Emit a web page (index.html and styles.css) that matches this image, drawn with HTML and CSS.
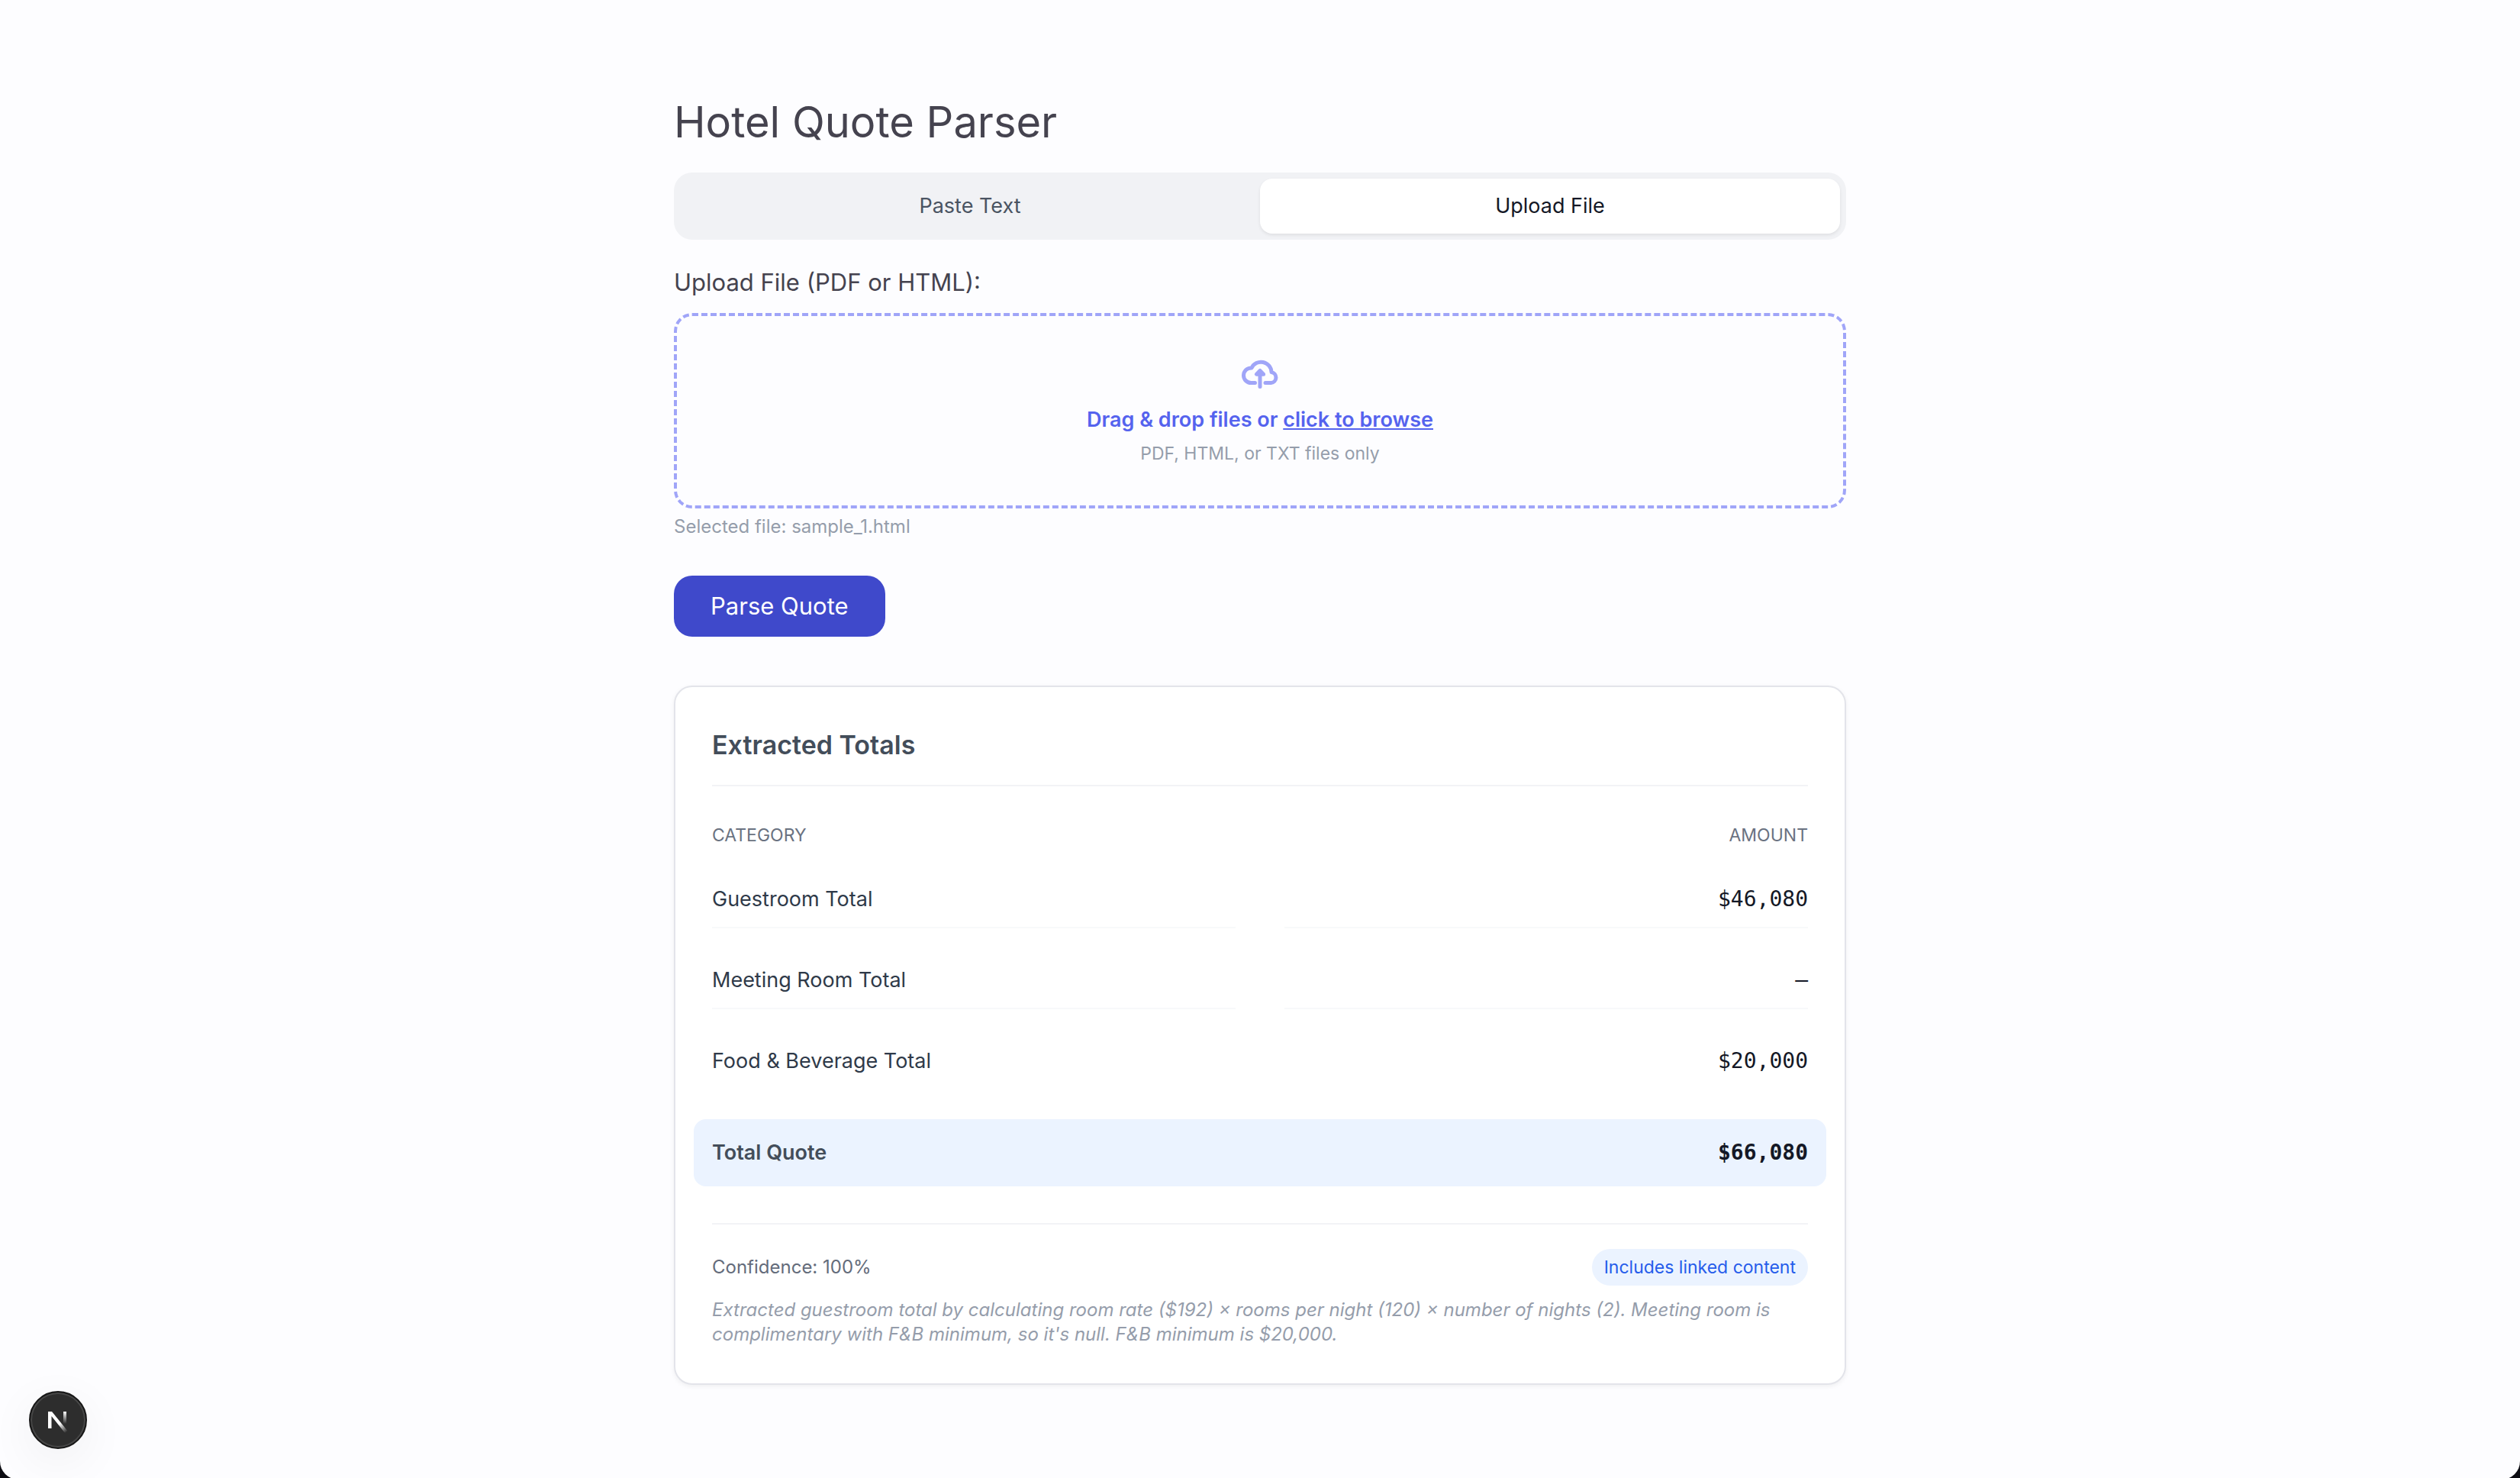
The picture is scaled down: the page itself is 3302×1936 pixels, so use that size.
FILE: index.html
```html
<!DOCTYPE html>
<html lang="en">
<head>
<meta charset="utf-8">
<meta name="viewport" content="width=device-width, initial-scale=1">
<title>Hotel Quote Parser</title>
<link rel="stylesheet" href="styles.css">
</head>
<body>
<main class="page">
  <h1 class="title">Hotel Quote Parser</h1>

  <div class="tabs" role="tablist">
    <button class="tab" type="button" role="tab" aria-selected="false">Paste Text</button>
    <button class="tab tab-active" type="button" role="tab" aria-selected="true">Upload File</button>
  </div>

  <label class="field-label" for="quote-file">Upload File (PDF or HTML):</label>
  <div class="dropzone">
    <svg class="dropzone-icon" viewBox="0 0 56 56" fill="none" stroke="currentColor" stroke-width="5" stroke-linecap="round" stroke-linejoin="round" aria-hidden="true">
      <path d="M21.500 39.500H16.300A9.800 9.800 0 0 1 16.300 19.900H17A13.700 13.700 0 0 1 43 25.200V25.600A7 7 0 0 1 42.500 39.500H35"/>
      <path d="M28 44.500V28"/>
      <path d="M28 23.500l-4.600 4.800h9.200z" fill="currentColor"/>
    </svg>
    <p class="dropzone-text">Drag &amp; drop files or <a class="browse" href="#quote-file">click to browse</a></p>
    <p class="dropzone-hint">PDF, HTML, or TXT files only</p>
    <input class="visually-hidden" id="quote-file" type="file" accept=".pdf,.html,.txt">
  </div>
  <p class="selected">Selected file: sample_1.html</p>

  <button class="submit" type="button">Parse Quote</button>

  <section class="card">
    <h2 class="card-title">Extracted Totals</h2>
    <table class="totals">
      <thead>
        <tr class="row row-head"><th>CATEGORY</th><th>AMOUNT</th></tr>
      </thead>
      <tbody>
        <tr class="row"><td>Guestroom Total</td><td class="amount">$46,080</td></tr>
        <tr class="row"><td>Meeting Room Total</td><td class="amount">—</td></tr>
        <tr class="row row-last"><td>Food &amp; Beverage Total</td><td class="amount">$20,000</td></tr>
      </tbody>
      <tfoot>
        <tr class="row row-total"><td>Total Quote</td><td class="amount">$66,080</td></tr>
      </tfoot>
    </table>
    <footer class="card-footer">
      <div class="meta">
        <span>Confidence: 100%</span>
        <span class="badge">Includes linked content</span>
      </div>
      <p class="note">Extracted guestroom total by calculating room rate ($192) × rooms per night (120) × number of nights (2). Meeting room is complimentary with F&amp;B minimum, so it's null. F&amp;B minimum is $20,000.</p>
    </footer>
  </section>
</main>

<button class="dev-button" type="button" aria-label="Open developer tools">
  <svg class="dev-logo" viewBox="0 0 76 76" fill="none" aria-hidden="true">
    <defs>
      <linearGradient id="fade-diagonal" gradientUnits="userSpaceOnUse" x1="40" y1="43" x2="49" y2="54">
        <stop stop-color="#fff"/><stop offset="1" stop-color="#fff" stop-opacity="0"/>
      </linearGradient>
      <linearGradient id="fade-stem" gradientUnits="userSpaceOnUse" x1="47" y1="27" x2="47" y2="43">
        <stop stop-color="#fff"/><stop offset="1" stop-color="#fff" stop-opacity="0"/>
      </linearGradient>
    </defs>
    <path d="M45 27h4v17h-4z" fill="url(#fade-stem)"/>
    <path d="M25 27h5l21 26-3.500 2.500L29.500 33v16H25z" fill="url(#fade-diagonal)"/>
  </svg>
</button>
</body>
</html>
```
FILE: styles.css
```css
* {
  box-sizing: border-box;
}

html {
  background: #0c0c12;
}

body {
  min-height: 100vh;
  margin: 0;
  border-radius: 0 0 24px 24px;
  background: #fdfdff;
  color: #45434f;
  font-family: Inter, "Liberation Sans", sans-serif;
}

h1, h2, p {
  margin: 0;
}

button {
  border: 0;
  font: inherit;
  cursor: pointer;
}

.page {
  max-width: 1536px;
  margin: 0 auto;
  padding: 124px 0;
}

.title {
  margin-bottom: 30px;
  font-size: 56px;
  font-weight: 400;
  line-height: 72px;
}

.tabs {
  display: grid;
  grid-template-columns: 1fr 1fr;
  padding: 8px;
  border-radius: 24px;
  background: #f1f2f5;
}

.tab {
  padding: 16px;
  border-radius: 16px;
  background: transparent;
  color: #4a5462;
  font-size: 27px;
  line-height: 40px;
}

.tab-active {
  background: #fff;
  box-shadow: 0 2px 4px rgba(0, 0, 0, 0.08);
  color: #141826;
}

.field-label {
  display: block;
  margin: 32px 0 16px;
  font-size: 31px;
  line-height: 48px;
}

.dropzone {
  position: relative;
  display: flex;
  flex-direction: column;
  align-items: center;
  padding: 48px 48px 52px;
  border: 4px dashed #a0a5f8;
  border-radius: 24px;
}

.dropzone-icon {
  width: 56px;
  height: 56px;
  margin-bottom: 12px;
  color: #a0a5f8;
}

.dropzone-text {
  margin-bottom: 8px;
  color: #5563ee;
  font-size: 27px;
  font-weight: 600;
  line-height: 40px;
}

.browse {
  color: inherit;
}

.dropzone-hint,
.selected {
  color: #959dab;
  font-size: 24px;
  line-height: 32px;
}

.dropzone-hint {
  font-size: 23px;
}

.selected {
  margin-top: 8px;
}

.visually-hidden {
  position: absolute;
  width: 1px;
  height: 1px;
  overflow: hidden;
  opacity: 0;
}

.submit {
  display: block;
  margin-top: 48px;
  padding: 16px 48px;
  border-radius: 24px;
  background: #3f49cb;
  color: #fff;
  font-size: 31px;
  line-height: 48px;
}

.card {
  margin-top: 64px;
  padding: 48px;
  border: 2px solid #e3e4ea;
  border-radius: 24px;
  background: #fff;
  box-shadow: 0 2px 6px rgba(0, 0, 0, 0.06);
}

.card-title {
  padding-bottom: 24px;
  border-bottom: 2px solid #f2f3f6;
  color: #434d5a;
  font-size: 34px;
  font-weight: 600;
  line-height: 56px;
}

.totals,
.totals thead,
.totals tbody,
.totals tfoot {
  display: block;
}

.totals {
  margin-top: 48px;
}

.row {
  display: grid;
  grid-template-columns: 1fr 1fr;
  column-gap: 64px;
  margin-top: 32px;
  color: #2f3a49;
  font-size: 27px;
  line-height: 40px;
}

.row td {
  padding: 16px 0;
  border-bottom: 2px solid #f8f9fa;
}

.row th {
  padding: 0;
  font-weight: 400;
  text-align: left;
}

.row th:last-child,
.row .amount {
  text-align: right;
}

.row .amount {
  color: #141826;
  font-family: "DejaVu Sans Mono", monospace;
  font-size: 28px;
}

.row-head {
  color: #6a7281;
  font-size: 23px;
  line-height: 32px;
}

.row.row-last td {
  border-bottom: 0;
}

.row-total {
  margin: 40px -24px 0;
  padding: 8px 24px;
  border-radius: 16px;
  background: #ebf3ff;
  color: #434d5a;
  font-weight: 600;
}

.row.row-total td {
  border-bottom: 0;
}

.row-total .amount {
  font-weight: 700;
}

.card-footer {
  margin-top: 48px;
  padding-top: 32px;
  border-top: 2px solid #f2f3f6;
  font-size: 24px;
  line-height: 32px;
}

.meta {
  display: flex;
  align-items: center;
  justify-content: space-between;
  color: #646c7b;
}

.badge {
  padding: 8px 16px;
  border-radius: 24px;
  background: #ebf3ff;
  color: #255ceb;
  font-size: 23px;
}

.note {
  margin-top: 16px;
  color: #959dab;
  font-style: italic;
}

.dev-button {
  position: fixed;
  bottom: 38px;
  left: 38px;
  width: 76px;
  height: 76px;
  padding: 0;
  border: 2px solid #171717;
  border-radius: 50%;
  background: #2d2d2d;
  box-shadow: inset 0 0 0 2px #474747, 0 16px 64px rgba(0, 0, 0, 0.06);
}

.dev-logo {
  display: block;
  width: 76px;
  height: 76px;
  margin: -2px;
}
```
